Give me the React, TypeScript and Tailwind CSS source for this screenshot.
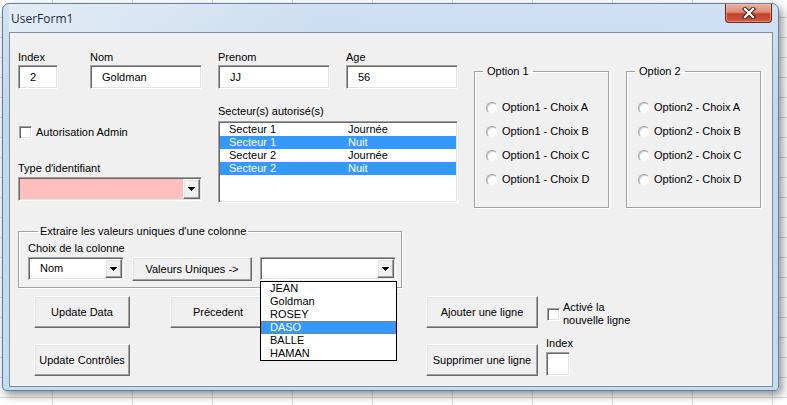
import React from "react";

// VBA UserForm on top of an Excel sheet, Windows 7 look.

const sunken =
  "border border-t-[#a0a0a0] border-l-[#a0a0a0] border-b-white border-r-white shadow-[inset_1px_1px_0_#696969,inset_-1px_-1px_0_#e3e3e3]";
const raised =
  "border border-t-white border-l-white border-b-[#696969] border-r-[#696969] shadow-[inset_-1px_-1px_0_#a0a0a0,inset_1px_1px_0_#e3e3e3] bg-[#f0f0f0]";

function DownArrow() {
  return (
    <svg width="7" height="4" viewBox="0 0 7 4" shapeRendering="crispEdges">
      <path d="M0 0h7v1h-1v1h-1v1h-1v1h-1v-1h-1v-1h-1v-1h-1z" fill="#000" />
    </svg>
  );
}

function TextBox({ value, className }: { value?: string; className: string }) {
  return (
    <div className={`${sunken} bg-white flex items-center pl-[11px] ${className}`}>
      {value}
    </div>
  );
}

function Combo({ value, className }: { value?: string; className: string }) {
  return (
    <div className={`${sunken} flex items-stretch p-[1px] ${className}`}>
      <div className="flex-1 flex items-center pl-[10px]">{value}</div>
      <div className={`${raised} w-[17px] flex items-center justify-center`}>
        <DownArrow />
      </div>
    </div>
  );
}

function Button({ label, className }: { label: string; className: string }) {
  return (
    <div className={`${raised} flex items-center justify-center ${className}`}>
      {label}
    </div>
  );
}

function CheckBox({ className }: { className: string }) {
  return <div className={`${sunken} bg-white w-[13px] h-[13px] shrink-0 ${className}`} />;
}

function Radio({ label }: { label: string }) {
  return (
    <div className="flex items-center h-[13px]">
      <div className="w-[12px] h-[12px] rounded-full bg-white border border-t-[#9c9c9c] border-l-[#9c9c9c] border-b-[#f2f2f2] border-r-[#f2f2f2] shadow-[inset_1px_1px_0_#d4d4d4]" />
      <span className="ml-[4px]">{label}</span>
    </div>
  );
}

function OptionFrame({ title, prefix, className }: { title: string; prefix: string; className: string }) {
  return (
    <fieldset className={`border border-[#a0a0a0] shadow-[1px_1px_0_#fff,inset_1px_1px_0_#fff] w-[135px] h-[143px] mt-[14px] ${className}`}>
      <legend className="ml-[8px] px-[4px] leading-[13px]">{title}</legend>
      <div className="pl-[11px] pt-[23px] flex flex-col gap-[11px]">
        {["A", "B", "C", "D"].map((c) => (
          <Radio key={c} label={`${prefix} - Choix ${c}`} />
        ))}
      </div>
    </fieldset>
  );
}

const SECTEURS = [
  { s: "Secteur 1", p: "Journée", sel: false },
  { s: "Secteur 1", p: "Nuit", sel: true },
  { s: "Secteur 2", p: "Journée", sel: false },
  { s: "Secteur 2", p: "Nuit", sel: true },
];

const NOMS = ["JEAN", "Goldman", "ROSEY", "DASO", "BALLE", "HAMAN"];

export default function App() {
  return (
    <div className="w-[787px] h-[405px] overflow-hidden bg-white bg-[linear-gradient(#d5d8db_1px,transparent_1px),linear-gradient(90deg,#d5d8db_1px,transparent_1px)] bg-[size:80px_20px] bg-[position:52px_17px] pt-[3px] pl-[2px] font-['Liberation_Sans',Arial,sans-serif] text-[11px] leading-[13px] text-black">
      <div className="w-[777px] h-[388px] rounded-t-[7px] rounded-b-[4px] border border-[#62809f] bg-[linear-gradient(180deg,#d3e2f2_0%,#bfd7ef_30%,#c5dcf2_100%)] shadow-[3px_4px_10px_rgba(0,0,0,0.45)] flex flex-col pl-[6px] pr-[5px] pb-[3px]">
        {/* title bar */}
        <div className="h-[28px] flex items-start justify-between bg-[linear-gradient(90deg,rgba(235,240,246,0.7)_0%,rgba(190,215,240,0.2)_40%,rgba(200,222,244,0.3)_100%)]">
          <div className="h-[28px] flex items-center pl-[2px] font-['Open_Sans',sans-serif] text-[12px] text-[#1e2b3b]">
            UserForm1
          </div>
          <div className="mr-[1px] w-[47px] h-[19px] rounded-b-[4px] border border-t-0 border-[#6e2418] bg-[linear-gradient(180deg,#eab0a2_0%,#df8b76_45%,#c4402a_55%,#cf5a3e_100%)] shadow-[inset_0_0_0_1px_rgba(255,200,190,0.5)] flex items-center justify-center">
            <svg width="14" height="12" viewBox="0 0 14 12">
              <path d="M3 2l8 8M11 2l-8 8" stroke="#3a0f08" strokeWidth="4.2" strokeLinecap="square" />
              <path d="M3 2l8 8M11 2l-8 8" stroke="#ffffff" strokeWidth="2.4" strokeLinecap="square" />
            </svg>
          </div>
        </div>

        {/* client area */}
        <div className="w-[764px] h-[355px] border border-[#7f8fa3] bg-[#f0f0f0] pl-[8px] pt-[18px]">
          <div className="flex h-[158px]">
            <div className="w-[440px]">
              <div className="flex">
                <div className="w-[40px]">
                  <div>Index</div>
                  <TextBox value="2" className="mt-[1px] h-[24px]" />
                </div>
                <div className="w-[112px] ml-[32px]">
                  <div>Nom</div>
                  <TextBox value="Goldman" className="mt-[1px] h-[24px]" />
                </div>
                <div className="w-[112px] ml-[16px]">
                  <div>Prenom</div>
                  <TextBox value="JJ" className="mt-[1px] h-[24px]" />
                </div>
                <div className="w-[112px] ml-[16px]">
                  <div>Age</div>
                  <TextBox value="56" className="mt-[1px] h-[24px]" />
                </div>
              </div>

              <div className="flex mt-[16px]">
                <div className="w-[184px]">
                  <div className="mt-[21px] flex items-center h-[13px]">
                    <CheckBox className="ml-[1px]" />
                    <span className="ml-[4px]">Autorisation Admin</span>
                  </div>
                  <div className="mt-[23px]">Type d'identifiant</div>
                  <Combo className="mt-[2px] h-[24px] bg-[#ffbfbf]" />
                </div>
                <div className="w-[240px] ml-[16px]">
                  <div>Secteur(s) autorisé(s)</div>
                  <div className={`${sunken} bg-white mt-[3px] h-[82px] p-[1px]`}>
                    {SECTEURS.map((r, i) => (
                      <div
                        key={i}
                        className={`flex h-[13px] items-center ${r.sel ? "bg-[#3399ff] text-white" : ""}`}
                      >
                        <div className="w-[128px] pl-[9px]">{r.s}</div>
                        <div>{r.p}</div>
                      </div>
                    ))}
                  </div>
                </div>
              </div>
            </div>

            <OptionFrame title="Option 1" prefix="Option1" className="ml-[16px]" />
            <OptionFrame title="Option 2" prefix="Option2" className="ml-[17px]" />
          </div>

          {/* unique values frame */}
          <fieldset className="border border-[#a0a0a0] shadow-[1px_1px_0_#fff,inset_1px_1px_0_#fff] w-[384px] mt-[16px] pl-[9px] pb-[6px]">
            <legend className="ml-[10px] px-[2px] leading-[13px]">Extraire les valeurs uniques d'une colonne</legend>
            <div className="pt-[4px]">Choix de la colonne</div>
            <div className="flex items-start mt-[2px]">
              <Combo value="Nom" className="w-[96px] h-[23px] bg-white" />
              <Button label="Valeurs Uniques ->" className="ml-[8px] w-[120px] h-[24px]" />
              <div className="relative ml-[8px]">
                <Combo className="w-[136px] h-[23px] bg-white" />
                <div className="absolute left-0 top-[24px] w-[137px] h-[80px] border border-black bg-white z-10">
                  {NOMS.map((n) => (
                    <div
                      key={n}
                      className={`h-[13px] flex items-center pl-[9px] ${
                        n === "DASO"
                          ? "bg-[#3399ff] text-white outline outline-1 outline-dotted outline-[#b0701c] -outline-offset-1"
                          : ""
                      }`}
                    >
                      {n}
                    </div>
                  ))}
                </div>
              </div>
            </div>
          </fieldset>

          {/* command buttons */}
          <div className="flex mt-[8px] ml-[16px]">
            <div className="flex flex-col gap-[16px]">
              <Button label="Update Data" className="w-[96px] h-[32px]" />
              <Button label="Update Contrôles" className="w-[96px] h-[32px]" />
            </div>
            <Button label="Précedent" className="ml-[40px] w-[96px] h-[32px]" />
            <div className="ml-[160px] flex flex-col gap-[16px]">
              <Button label="Ajouter une ligne" className="w-[112px] h-[32px]" />
              <Button label="Supprimer une ligne" className="w-[112px] h-[32px]" />
            </div>
            <div className="ml-[8px]">
              <div className="mt-[5px] flex items-start">
                <CheckBox className="ml-[1px] mt-[7px]" />
                <div className="ml-[3px]">
                  Activé la
                  <br />
                  nouvelle ligne
                </div>
              </div>
              <div className="mt-[10px]">Index</div>
              <TextBox className="mt-[2px] w-[24px] h-[24px]" />
            </div>
          </div>
        </div>
      </div>
    </div>
  );
}
